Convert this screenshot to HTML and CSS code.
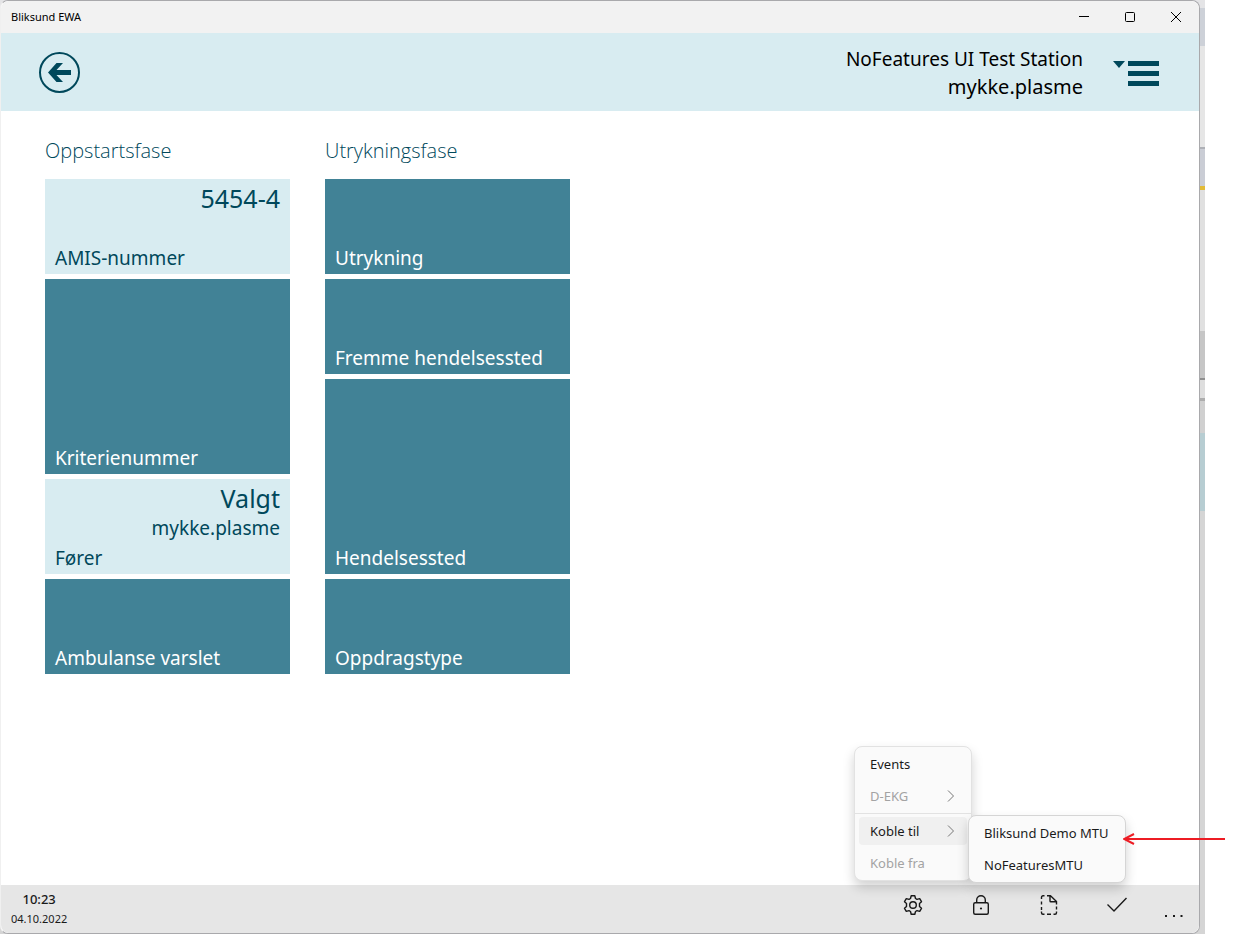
FILE: index.html
```html
<!DOCTYPE html>
<html lang="no">
<head>
<meta charset="utf-8">
<title>Bliksund EWA</title>
<link rel="stylesheet" href="styles.css">
</head>
<body>
<div class="desktop">
  <div class="window">
    <div class="titlebar">
      <span class="app-name">Bliksund EWA</span>
      <button class="win-btn" aria-label="Minimize"><svg width="12" height="12" viewBox="0 0 12 12"><path d="M1 5.500h10"/></svg></button>
      <button class="win-btn" aria-label="Maximize"><svg width="12" height="12" viewBox="0 0 12 12"><rect x="1.500" y="1.500" width="9" height="9" rx="1"/></svg></button>
      <button class="win-btn" aria-label="Close"><svg width="12" height="12" viewBox="0 0 12 12"><path d="M1 1l10 10M11 1L1 11"/></svg></button>
    </div>
    <header class="header">
      <button class="back" aria-label="Back">
        <svg width="42" height="42" viewBox="0 0 42 42"><circle cx="21.500" cy="21.500" r="19.500" fill="none" stroke="#00485b" stroke-width="2"/><path d="M10 21.500l8.500-9.500h6.500L18.500 19H33v5H18.500L25 31h-6.500z" fill="#00485b"/></svg>
      </button>
      <div class="station"><div class="station-name">NoFeatures UI Test Station</div><div class="user-name">mykke.plasme</div></div>
      <button class="main-menu" aria-label="Menu">
        <svg width="46" height="26" viewBox="0 0 46 26" fill="#00485b"><path d="M0 0h12L6 7z"/><path d="M15 0h31v5H15zM15 10h31v5H15zM15 20h31v5H15z"/></svg>
      </button>
    </header>
    <main class="content">
      <section class="phase">
        <h2>Oppstartsfase</h2>
        <button class="tile done"><span class="value">5454-4</span><span class="label">AMIS-nummer</span></button>
        <button class="tile tall"><span class="label">Kriterienummer</span></button>
        <button class="tile done"><span class="value">Valgt</span><span class="detail">mykke.plasme</span><span class="label">Fører</span></button>
        <button class="tile"><span class="label">Ambulanse varslet</span></button>
      </section>
      <section class="phase">
        <h2>Utrykningsfase</h2>
        <button class="tile"><span class="label">Utrykning</span></button>
        <button class="tile"><span class="label">Fremme hendelsessted</span></button>
        <button class="tile tall"><span class="label">Hendelsessted</span></button>
        <button class="tile"><span class="label">Oppdragstype</span></button>
      </section>
    </main>
    <footer class="appbar">
      <div class="clock"><time class="time">10:23</time><time class="date">04.10.2022</time></div>
      <div class="command">
        <button class="cmd" aria-label="Settings">
          <svg width="20" height="20" viewBox="0 0 20 20"><path d="M8.200 .8h3.600l.7 2.700 1.500.9 2.700-.8 1.800 3.100-2 1.900v2.800l2 1.900-1.800 3.100-2.700-.8-1.500.9-.7 2.700H8.200l-.7-2.700-1.500-.9-2.700.8-1.800-3.100 2-1.900V8.600l-2-1.900 1.800-3.100 2.700.8 1.500-.9z"/><circle cx="10" cy="10" r="3.300"/></svg>
        </button>
        <ul class="menu">
          <li><button>Events</button></li>
          <li><button disabled>D-EKG<svg class="chev" width="8" height="12" viewBox="0 0 8 12"><path d="M1 .5L6.500 6 1 11.500"/></svg></button></li>
          <li class="divider"></li>
          <li class="parent"><button class="open">Koble til<svg class="chev" width="8" height="12" viewBox="0 0 8 12"><path d="M1 .5L6.500 6 1 11.500"/></svg></button>
            <ul class="menu submenu">
              <li><button>Bliksund Demo MTU</button></li>
              <li><button>NoFeaturesMTU</button></li>
            </ul>
          </li>
          <li><button disabled>Koble fra</button></li>
        </ul>
      </div>
      <button class="cmd" aria-label="Lock"><svg width="20" height="20" viewBox="0 0 20 20"><rect x="2.700" y="7.700" width="14.600" height="11.600" rx="1.500"/><path d="M5.700 7.700V5a4.300 4.300 0 0 1 8.600 0v2.700"/><circle cx="10" cy="13.500" r="1.100" fill="#1a1a1a" stroke="none"/></svg></button>
      <button class="cmd" aria-label="New document"><svg width="20" height="20" viewBox="0 0 20 20"><path d="M5.500 .8H4a1.500 1.500 0 0 0-1.500 1.500V4M2.500 6.500v3M2.500 12v3M2.500 16.500v1.200A1.500 1.500 0 0 0 4 19.200h1.500M8 19.200h4M14.500 19.200H16a1.500 1.500 0 0 0 1.500-1.500v-1.200M17.500 14.500v-3M17.500 9.500v-3L11.500.8H8M11 1v5a.8.8 0 0 0 .8.800h5.500"/></svg></button>
      <button class="cmd" aria-label="Accept"><svg width="20" height="20" viewBox="0 0 20 20"><path d="M.5 9.500l6.500 6.500L19.500 3"/></svg></button>
      <button class="cmd more" aria-label="More"><svg width="20" height="20" viewBox="0 0 20 20"><path d="M0 19h2v-2H0zM8 19h2v-2H8zM15.500 19h2v-2h-2z" fill="#1a1a1a" stroke="none"/></svg></button>
    </footer>
  </div>
  <svg class="pointer" width="104" height="14" viewBox="0 0 104 14"><path d="M102 7H1M11 2L1 7l10 5"/></svg>
</div>
</body>
</html>
```
FILE: styles.css
```css
* { box-sizing: border-box; }
body {
  margin: 0;
  background: #fff;
  font-family: "Noto Sans", "Open Sans", sans-serif;
  color: #1a1a1a;
}
button {
  margin: 0;
  padding: 0;
  border: 0;
  background: none;
  font: inherit;
  color: inherit;
  text-align: left;
}
svg { display: block; }

/* The windows lying behind show as bands along the right edge. */
.desktop {
  position: relative;
  height: calc(100vh - 4px);
  margin-right: 46px;
  padding-right: 5px;
  background: linear-gradient(
    #e4e4e6 0 8px, #cdd1d8 8px 46px, #e6e6e6 46px 147px,
    #aeb0b6 147px 149px, #cacdd5 149px 186px, #e2bb38 186px 190px,
    #e0e0e0 190px 331px, #c6c6c6 331px 378px, #8f8f8f 378px 380px,
    #dedede 380px 398px, #adadad 398px 401px, #d0d0d0 401px 433px,
    #b7cdd2 433px 511px, #d5d5d5 511px);
}
.window {
  display: flex;
  flex-direction: column;
  height: 100%;
  border: 1px solid #a9a9ac;
  border-left-color: #f0f0f0;
  border-radius: 8px;
  background: #fff;
}
.titlebar {
  display: flex;
  align-items: center;
  height: 32px;
  background: #f2f2f2;
  border-radius: 8px 8px 0 0;
}
.app-name {
  flex: 1;
  padding: 0 0 2px 10px;
  font-size: 11px;
  color: #000;
}
.win-btn {
  display: flex;
  align-items: center;
  justify-content: center;
  width: 46px;
  height: 32px;
}
.win-btn svg { fill: none; stroke: #000; }

.header {
  display: flex;
  align-items: center;
  height: 78px;
  padding: 2px 40px 0 37px;
  background: #d8ecf1;
}
.back svg { overflow: visible; }
.back { padding-bottom: 2px; }
.main-menu { padding-top: 2px; }
.station {
  flex: 1;
  padding-right: 30px;
  text-align: right;
  font-size: 19px;
  line-height: 28px;
  color: #000;
}
.user-name { font-size: 20px; }

.content {
  display: flex;
  flex: 1;
  gap: 35px;
  padding: 24px 44px;
}
.phase {
  display: flex;
  flex-direction: column;
  gap: 5px;
  width: 245px;
}
h2 {
  margin: 0 0 7px;
  font-family: "Open Sans", "Noto Sans", sans-serif;
  font-size: 20px;
  font-weight: 300;
  line-height: 32px;
  color: #00485b;
}
.tile {
  display: flex;
  flex-direction: column;
  height: 95px;
  padding: 4px 10px 2px;
  background: #418296;
  color: #fff;
  font-size: 19px;
  line-height: 28px;
}
.tall { height: 195px; }
.done { background: #d8ecf1; color: #00485b; }
.label { margin-top: auto; }
.value {
  align-self: flex-end;
  font-size: 25px;
  line-height: 31px;
}
.detail { align-self: flex-end; }

.appbar {
  display: flex;
  height: 48px;
  background: #e6e6e6;
  border-radius: 0 0 8px 8px;
}
.clock {
  display: flex;
  flex-direction: column;
  margin-right: auto;
  padding: 4px 10px;
  text-align: center;
}
.time { font-size: 13px; font-weight: 500; line-height: 20px; }
.date { font-size: 11px; line-height: 20px; }
.cmd {
  display: flex;
  justify-content: center;
  width: 68px;
  height: 48px;
  padding-top: 10px;
}
.cmd svg {
  fill: none;
  stroke: #1a1a1a;
  stroke-width: 1.4;
  stroke-linejoin: round;
}
.more { width: 48px; padding-top: 13px; }
.command { position: relative; }

.menu {
  position: absolute;
  left: -25px;
  bottom: calc(100% + 4px);
  width: 118px;
  margin: 0;
  padding: 1px 0;
  border: 1px solid #e2e2e2;
  border-radius: 8px;
  background: #fafafa;
  box-shadow: 0 6px 12px rgba(0, 0, 0, .18);
  list-style: none;
  font-size: 13px;
  white-space: nowrap;
}
.menu li { padding: 2px 4px; }
.menu button {
  display: flex;
  align-items: center;
  justify-content: space-between;
  width: 100%;
  height: 28px;
  padding: 0 12px 0 11px;
  border-radius: 4px;
}
.menu .divider {
  height: 1px;
  margin: 1px 0;
  padding: 0;
  background: #e2e2e2;
}
.menu button:disabled { color: #a3a3a3; }
.menu .open { background: #f0f0f0; }
.chev { fill: none; stroke: #777; }
.menu .parent { position: relative; }
.submenu {
  top: 0;
  bottom: auto;
  left: calc(100% - 3px);
  width: 158px;
  border-color: #d5d5d5;
}
.pointer {
  position: absolute;
  right: -22px;
  bottom: 88px;
  fill: none;
  stroke: #ed1c24;
  stroke-width: 2;
}
```
